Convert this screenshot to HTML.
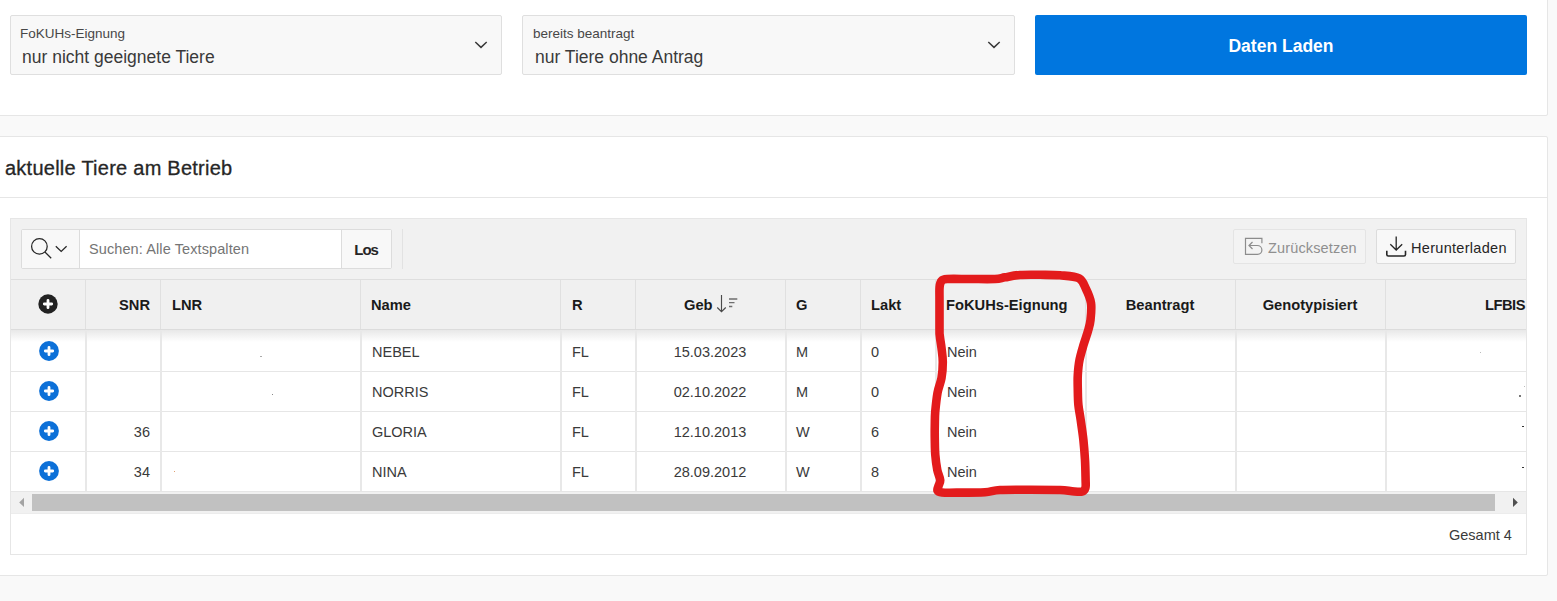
<!DOCTYPE html>
<html>
<head>
<meta charset="utf-8">
<style>
*{box-sizing:border-box;margin:0;padding:0}
html,body{width:1557px;height:601px;overflow:hidden;background:#f9f9f9;font-family:"Liberation Sans",sans-serif;color:#262626}
.abs{position:absolute}
.card1{left:-10px;top:-10px;width:1558px;height:126px;background:#fff;border:1px solid #e6e6e6;border-radius:2px}
.card2{left:-10px;top:136px;width:1558px;height:440px;background:#fff;border:1px solid #e6e6e6;border-radius:2px}
.sel{top:15px;height:60px;width:492px;background:#f8f8f8;border:1px solid #dfdfdf;border-radius:2px}
.lbl{font-size:13.5px;color:#474747;white-space:nowrap}
.val{font-size:17.5px;color:#3a3a3a;white-space:nowrap}
.btn{left:1035px;top:15px;width:492px;height:60px;background:#0076df;border-radius:2px}
.t{white-space:nowrap;line-height:1}
.hdr{font-size:14.7px;font-weight:bold;color:#1a1a1a}
.cell{font-size:14.5px;color:#3a3a3a}
.vl{width:1px;background:#e0e0e0}
.bl{width:2px;background:#e8e8e8}
.hl{height:1px;background:#e6e6e6}
</style>
</head>
<body>
<!-- Card 1 -->
<div class="abs card1"></div>
<div class="abs sel" style="left:10px"></div>
<div class="abs t lbl" style="left:20px;top:27px">FoKUHs-Eignung</div>
<div class="abs t val" style="left:22px;top:49px">nur nicht geeignete Tiere</div>
<svg class="abs" style="left:474px;top:40px" width="14" height="10" viewBox="0 0 14 10"><path d="M1.3 2 L7 7.4 L12.7 2" fill="none" stroke="#383838" stroke-width="1.45"/></svg>

<div class="abs sel" style="left:522px;width:493px"></div>
<div class="abs t lbl" style="left:533px;top:27px">bereits beantragt</div>
<div class="abs t val" style="left:535px;top:49px">nur Tiere ohne Antrag</div>
<svg class="abs" style="left:987px;top:40px" width="14" height="10" viewBox="0 0 14 10"><path d="M1.3 2 L7 7.4 L12.7 2" fill="none" stroke="#383838" stroke-width="1.45"/></svg>

<div class="abs btn"></div>
<div class="abs t" style="left:1035px;width:492px;top:38px;text-align:center;font-size:17.5px;font-weight:bold;color:#fff">Daten Laden</div>

<!-- Card 2 -->
<div class="abs card2"></div>
<div class="abs t" style="left:5px;top:158px;font-size:20px;color:#262626;-webkit-text-stroke:0.3px #262626;letter-spacing:0.25px">aktuelle Tiere am Betrieb</div>
<div class="abs hl" style="left:0;top:197px;width:1548px"></div>

<!-- IR -->
<div class="abs" style="left:10px;top:218px;width:1517px;height:337px;border:1px solid #e6e6e6;background:#fff"></div>
<div class="abs" style="left:11px;top:219px;width:1515px;height:60px;background:#f1f1f1"></div>
<div class="abs hl" style="left:11px;top:279px;width:1515px;background:#dedede"></div>

<!-- search group -->
<div class="abs" style="left:21px;top:229px;width:371px;height:40px;border:1px solid #dcdcdc;border-radius:2px;background:#fff"></div>
<div class="abs" style="left:22px;top:230px;width:58px;height:38px;background:#f8f8f8;border-right:1px solid #dcdcdc"></div>
<svg class="abs" style="left:28px;top:235px" width="44" height="28" viewBox="0 0 44 28">
  <circle cx="11.4" cy="11.4" r="7.8" fill="none" stroke="#262626" stroke-width="1.25"/>
  <path d="M16.9 17 L23.2 23.2" stroke="#262626" stroke-width="1.25" fill="none"/>
  <path d="M27.8 11.2 L33.2 16.4 L38.6 11.2" stroke="#262626" stroke-width="1.25" fill="none"/>
</svg>
<div class="abs t" style="left:89px;top:242px;font-size:14.5px;letter-spacing:0.1px;color:#757575">Suchen: Alle Textspalten</div>
<div class="abs" style="left:341px;top:230px;width:50px;height:38px;background:#f8f8f8;border-left:1px solid #dcdcdc"></div>
<div class="abs t" style="left:341px;width:50px;text-align:center;top:242px;font-size:15px;letter-spacing:-1.1px;font-weight:bold;color:#262626">Los</div>
<div class="abs vl" style="left:402px;top:229px;height:40px;background:#e2e2e2"></div>

<!-- right buttons -->
<div class="abs" style="left:1233px;top:229px;width:133px;height:35px;border:1px solid #e4e4e4;border-radius:2px;background:#f3f3f3"></div>
<svg class="abs" style="left:1244px;top:237px" width="20" height="20" viewBox="0 0 20 20">
  <path d="M17.9 6.2 V1.4 H1.5 V17.4 H13.5 C16 17.4 17.9 15.5 17.9 13 C17.9 10.5 16 8.5 13.2 8.5 H5 M8.5 5 L5 8.5 L8.5 12" fill="none" stroke="#8c8c8c" stroke-width="1.2"/>
</svg>
<div class="abs t" style="left:1268px;top:241px;font-size:14.5px;letter-spacing:0.15px;color:#8f8f8f">Zurücksetzen</div>

<div class="abs" style="left:1376px;top:229px;width:140px;height:35px;border:1px solid #dcdcdc;border-radius:2px;background:#f8f8f8"></div>
<svg class="abs" style="left:1385px;top:235px" width="23" height="23" viewBox="0 0 23 23">
  <path d="M11.2 1.5 V15 M5.3 9.2 L11.2 15 L17.2 9.2" fill="none" stroke="#262626" stroke-width="1.3"/>
  <path d="M1.8 15.8 V19.5 Q1.8 21 3.3 21 H19 Q20.5 21 20.5 19.5 V15.8" fill="none" stroke="#262626" stroke-width="1.6"/>
</svg>
<div class="abs t" style="left:1411px;top:241px;font-size:14.5px;letter-spacing:0.3px;color:#262626">Herunterladen</div>

<!-- header row -->
<div class="abs" style="left:11px;top:280px;width:1515px;height:49px;background:#f0f0f0"></div>
<div class="abs hl" style="left:11px;top:329px;width:1515px;background:#dcdcdc"></div>
<div class="abs" style="left:11px;top:330px;width:1515px;height:12px;background:linear-gradient(#e8e8e8,rgba(255,255,255,0))"></div>

<!-- header separators -->
<div class="abs vl" style="left:85px;top:280px;height:49px"></div>
<div class="abs vl" style="left:160px;top:280px;height:49px"></div>
<div class="abs vl" style="left:360px;top:280px;height:49px"></div>
<div class="abs vl" style="left:560px;top:280px;height:49px"></div>
<div class="abs vl" style="left:635px;top:280px;height:49px"></div>
<div class="abs vl" style="left:785px;top:280px;height:49px"></div>
<div class="abs vl" style="left:860px;top:280px;height:49px"></div>
<div class="abs vl" style="left:935px;top:280px;height:49px"></div>
<div class="abs vl" style="left:1085px;top:280px;height:49px"></div>
<div class="abs vl" style="left:1235px;top:280px;height:49px"></div>
<div class="abs vl" style="left:1385px;top:280px;height:49px"></div>

<!-- header plus -->
<svg class="abs" style="left:37px;top:293px" width="22" height="22" viewBox="0 0 22 22">
  <circle cx="11" cy="11" r="9.7" fill="#222"/>
  <path d="M11 7.3 V14.7 M7.3 11 H14.7" stroke="#fff" stroke-width="2.8" stroke-linecap="round"/>
</svg>

<div class="abs t hdr" style="left:85px;width:65px;text-align:right;top:298px">SNR</div>
<div class="abs t hdr" style="left:172px;top:298px">LNR</div>
<div class="abs t hdr" style="left:371px;top:298px">Name</div>
<div class="abs t hdr" style="left:572px;top:298px">R</div>
<div class="abs t hdr" style="left:684px;top:298px">Geb</div>
<svg class="abs" style="left:716px;top:295px" width="24" height="20" viewBox="0 0 24 20">
  <path d="M5.5 0 V16.75 M1.25 12.5 L5.5 16.75 L9.75 12.5" fill="none" stroke="#4a4a4a" stroke-width="1.15"/>
  <path d="M13 4 H21.3 M13 7.6 H18.5 M13 11.5 H16.3" fill="none" stroke="#6e6e6e" stroke-width="1.3"/>
</svg>
<div class="abs t hdr" style="left:796px;top:298px">G</div>
<div class="abs t hdr" style="left:871px;top:298px">Lakt</div>
<div class="abs t hdr" style="left:946px;top:298px">FoKUHs-Eignung</div>
<div class="abs t hdr" style="left:1085px;width:150px;text-align:center;top:298px">Beantragt</div>
<div class="abs t hdr" style="left:1235px;width:150px;text-align:center;top:298px">Genotypisiert</div>
<div class="abs t hdr" style="left:1385px;width:140px;text-align:right;top:298px;letter-spacing:-0.5px">LFBIS</div>

<!-- body -->
<div class="abs hl" style="left:11px;top:371px;width:1515px"></div>
<div class="abs hl" style="left:11px;top:411px;width:1515px"></div>
<div class="abs hl" style="left:11px;top:451px;width:1515px"></div>
<div class="abs hl" style="left:11px;top:491px;width:1515px"></div>

<div class="abs bl" style="left:85px;top:331px;height:160px"></div>
<div class="abs bl" style="left:160px;top:331px;height:160px"></div>
<div class="abs bl" style="left:360px;top:331px;height:160px"></div>
<div class="abs bl" style="left:560px;top:331px;height:160px"></div>
<div class="abs bl" style="left:635px;top:331px;height:160px"></div>
<div class="abs bl" style="left:785px;top:331px;height:160px"></div>
<div class="abs bl" style="left:860px;top:331px;height:160px"></div>
<div class="abs bl" style="left:935px;top:331px;height:160px"></div>
<div class="abs bl" style="left:1085px;top:331px;height:160px"></div>
<div class="abs bl" style="left:1235px;top:331px;height:160px"></div>
<div class="abs bl" style="left:1385px;top:331px;height:160px"></div>

<!-- rows -->
<svg class="abs" style="left:37.5px;top:340px" width="22" height="22" viewBox="0 0 22 22"><circle cx="11" cy="11" r="9.9" fill="#0c70d8"/><path d="M11 7.3 V14.7 M7.3 11 H14.7" stroke="#fff" stroke-width="2.8" stroke-linecap="round"/></svg>
<svg class="abs" style="left:37.5px;top:380px" width="22" height="22" viewBox="0 0 22 22"><circle cx="11" cy="11" r="9.9" fill="#0c70d8"/><path d="M11 7.3 V14.7 M7.3 11 H14.7" stroke="#fff" stroke-width="2.8" stroke-linecap="round"/></svg>
<svg class="abs" style="left:37.5px;top:420px" width="22" height="22" viewBox="0 0 22 22"><circle cx="11" cy="11" r="9.9" fill="#0c70d8"/><path d="M11 7.3 V14.7 M7.3 11 H14.7" stroke="#fff" stroke-width="2.8" stroke-linecap="round"/></svg>
<svg class="abs" style="left:37.5px;top:460px" width="22" height="22" viewBox="0 0 22 22"><circle cx="11" cy="11" r="9.9" fill="#0c70d8"/><path d="M11 7.3 V14.7 M7.3 11 H14.7" stroke="#fff" stroke-width="2.8" stroke-linecap="round"/></svg>

<div class="abs t cell" style="left:372px;top:345px">NEBEL</div>
<div class="abs t cell" style="left:572px;top:345px">FL</div>
<div class="abs t cell" style="left:635px;width:150px;text-align:center;top:345px">15.03.2023</div>
<div class="abs t cell" style="left:796px;top:345px">M</div>
<div class="abs t cell" style="left:871px;top:345px">0</div>
<div class="abs t cell" style="left:947px;top:345px">Nein</div>

<div class="abs t cell" style="left:372px;top:385px">NORRIS</div>
<div class="abs t cell" style="left:572px;top:385px">FL</div>
<div class="abs t cell" style="left:635px;width:150px;text-align:center;top:385px">02.10.2022</div>
<div class="abs t cell" style="left:796px;top:385px">M</div>
<div class="abs t cell" style="left:871px;top:385px">0</div>
<div class="abs t cell" style="left:947px;top:385px">Nein</div>

<div class="abs t cell" style="left:85px;width:65px;text-align:right;top:425px">36</div>
<div class="abs t cell" style="left:372px;top:425px">GLORIA</div>
<div class="abs t cell" style="left:572px;top:425px">FL</div>
<div class="abs t cell" style="left:635px;width:150px;text-align:center;top:425px">12.10.2013</div>
<div class="abs t cell" style="left:796px;top:425px">W</div>
<div class="abs t cell" style="left:871px;top:425px">6</div>
<div class="abs t cell" style="left:947px;top:425px">Nein</div>

<div class="abs t cell" style="left:85px;width:65px;text-align:right;top:465px">34</div>
<div class="abs t cell" style="left:372px;top:465px">NINA</div>
<div class="abs t cell" style="left:572px;top:465px">FL</div>
<div class="abs t cell" style="left:635px;width:150px;text-align:center;top:465px">28.09.2012</div>
<div class="abs t cell" style="left:796px;top:465px">W</div>
<div class="abs t cell" style="left:871px;top:465px">8</div>
<div class="abs t cell" style="left:947px;top:465px">Nein</div>


<!-- specks -->
<div class="abs" style="left:260px;top:356px;width:2px;height:1px;background:#aaa"></div>
<div class="abs" style="left:272px;top:394px;width:1px;height:1px;background:#888"></div>
<div class="abs" style="left:174px;top:471px;width:1px;height:1px;background:#e0a070"></div>
<div class="abs" style="left:1480px;top:352px;width:1px;height:1px;background:#bbb"></div>
<div class="abs" style="left:1524px;top:386px;width:1px;height:1px;background:#bbb"></div>
<div class="abs" style="left:1519px;top:395px;width:2px;height:2px;background:#777"></div>
<div class="abs" style="left:1522px;top:426px;width:2px;height:1px;background:#333"></div>
<div class="abs" style="left:1522px;top:467px;width:2px;height:1px;background:#333"></div>

<!-- scrollbar -->
<div class="abs" style="left:11px;top:492px;width:1515px;height:21px;background:#f1f1f1"></div>
<div class="abs" style="left:32px;top:494px;width:1463px;height:17px;background:#c1c1c1"></div>
<svg class="abs" style="left:17px;top:497px" width="10" height="12" viewBox="0 0 10 12"><path d="M7 0.8 V10 L2.2 5.4 Z" fill="#a3a3a3"/></svg>
<svg class="abs" style="left:1511px;top:497px" width="10" height="12" viewBox="0 0 10 12"><path d="M2 0.8 V10 L6.8 5.4 Z" fill="#505050"/></svg>
<div class="abs hl" style="left:11px;top:513px;width:1515px;background:#ececec"></div>

<div class="abs t cell" style="left:1449px;top:528px;font-size:14.5px">Gesamt 4</div>

<!-- red outline -->
<svg class="abs" style="left:0;top:0" width="1557" height="601" viewBox="0 0 1557 601">
<path d="M939.5 330.0 C939.5 324.0 939.5 307.2 939.5 300.0 C939.5 292.8 939.3 290.2 939.6 287.0 C939.9 283.8 940.3 282.3 941.5 281.0 C942.7 279.7 942.2 279.3 947.0 279.0 C951.8 278.7 962.0 279.0 970.0 279.0 C978.0 279.0 989.2 279.3 995.0 279.0 C1000.8 278.7 1000.8 278.0 1005.0 277.3 C1009.2 276.6 1014.2 275.4 1020.0 275.0 C1025.8 274.6 1033.3 274.8 1040.0 274.8 C1046.7 274.9 1053.5 274.7 1060.0 275.3 C1066.5 275.9 1074.7 276.0 1079.0 278.3 C1083.3 280.6 1084.0 284.9 1086.0 289.0 C1088.0 293.1 1090.2 297.8 1091.0 303.0 C1091.8 308.2 1091.0 315.3 1090.5 320.0 C1090.0 324.7 1089.2 326.8 1088.0 331.0 C1086.8 335.2 1084.9 340.2 1083.5 345.0 C1082.1 349.8 1080.5 355.0 1079.5 360.0 C1078.5 365.0 1078.1 370.0 1077.8 375.0 C1077.5 380.0 1077.7 385.0 1077.8 390.0 C1077.9 395.0 1077.9 400.0 1078.4 405.0 C1078.9 410.0 1079.9 414.2 1080.7 420.0 C1081.5 425.8 1082.7 433.3 1083.4 440.0 C1084.1 446.7 1084.6 453.3 1085.0 460.0 C1085.4 466.7 1085.5 475.3 1085.6 480.0 C1085.7 484.7 1086.0 486.1 1085.4 488.0 C1084.8 489.9 1084.2 491.1 1082.0 491.6 C1079.8 492.1 1075.7 491.5 1072.0 491.2 C1068.3 490.9 1067.0 490.2 1060.0 490.0 C1053.0 489.8 1040.0 489.8 1030.0 489.8 C1020.0 489.8 1007.5 489.6 1000.0 490.0 C992.5 490.4 991.7 491.8 985.0 492.2 C978.3 492.6 967.2 492.6 960.0 492.6 C952.8 492.7 945.8 492.9 942.0 492.5 C938.2 492.1 938.1 491.6 937.5 490.5 C936.9 489.4 938.0 487.8 938.5 486.0 C939.0 484.2 940.4 482.7 940.2 480.0 C940.0 477.3 938.1 474.2 937.3 470.0 C936.5 465.8 935.7 460.0 935.3 455.0 C934.9 450.0 934.9 445.0 934.8 440.0 C934.7 435.0 934.7 429.7 934.8 425.0 C934.9 420.3 934.8 417.3 935.2 412.0 C935.7 406.7 936.5 398.7 937.5 393.0 C938.5 387.3 940.6 383.2 941.5 378.0 C942.4 372.8 942.8 367.0 942.8 362.0 C942.8 357.0 942.0 352.3 941.5 348.0 C941.0 343.7 940.1 339.0 939.8 336.0 C939.5 333.0 939.5 336.0 939.5 330.0 Z" fill="none" stroke="#e31b1c" stroke-width="8.6" stroke-linejoin="round" stroke-linecap="round"/>
</svg>
</body>
</html>
